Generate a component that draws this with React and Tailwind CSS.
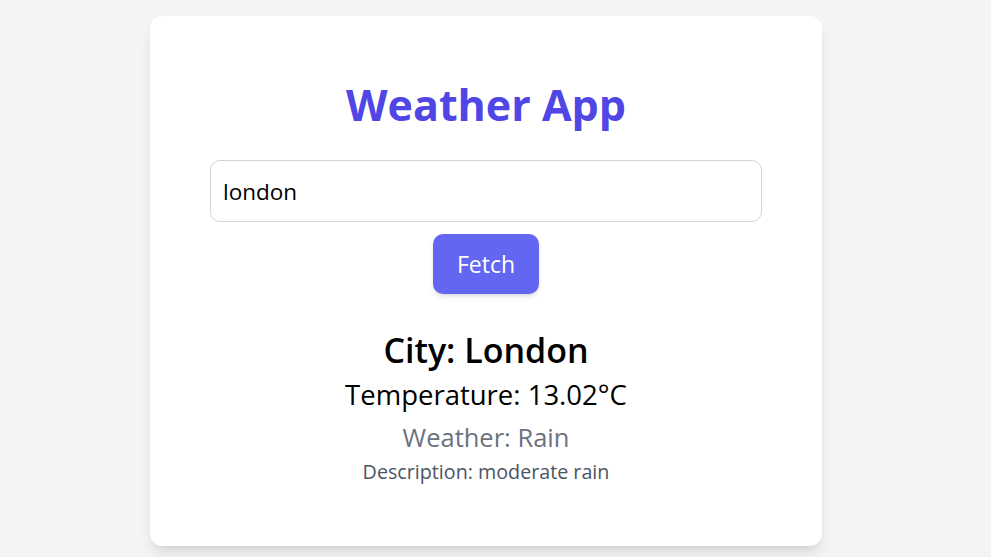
import React, { useState } from "react";

export default function App() {
  const [city, setCity] = useState("london");

  return (
    <div
      className="min-h-screen bg-[#f3f4f6] pt-4"
      style={{ fontFamily: '"Open Sans", "Noto Sans", sans-serif' }}
    >
      <div className="w-[972px]">
        <div className="mx-auto w-[672px] bg-white rounded-xl shadow-lg px-[60px] pt-[65px] pb-[58px]">
          <h1 className="text-center text-[43px] leading-[48px] font-bold text-[#4f46e5]">
            Weather App
          </h1>

          <input
            type="text"
            value={city}
            onChange={(e) => setCity(e.target.value)}
            className="mt-[31px] block w-full h-[62px] px-3 text-[22.5px] text-black border border-[#d1d5db] rounded-[10px] outline-none"
          />

          <div className="flex justify-center mt-3">
            <button
              type="button"
              className="h-[60px] px-6 text-[23px] text-white bg-[#6366f1] rounded-[10px] shadow-md"
            >
              Fetch
            </button>
          </div>

          {/* Result */}
          <div className="mt-[34px] text-center">
            <h2 className="text-[34px] leading-[44px] font-semibold text-black">City: London</h2>
            <p className="text-[27.5px] leading-[46px] text-black">Temperature: 13.02°C</p>
            <p className="text-[25.5px] leading-[38px] text-[#6b7280]">Weather: Rain</p>
            <p className="text-[19.7px] leading-[32px] text-[#4b5563]">Description: moderate rain</p>
          </div>
        </div>
      </div>
    </div>
  );
}
